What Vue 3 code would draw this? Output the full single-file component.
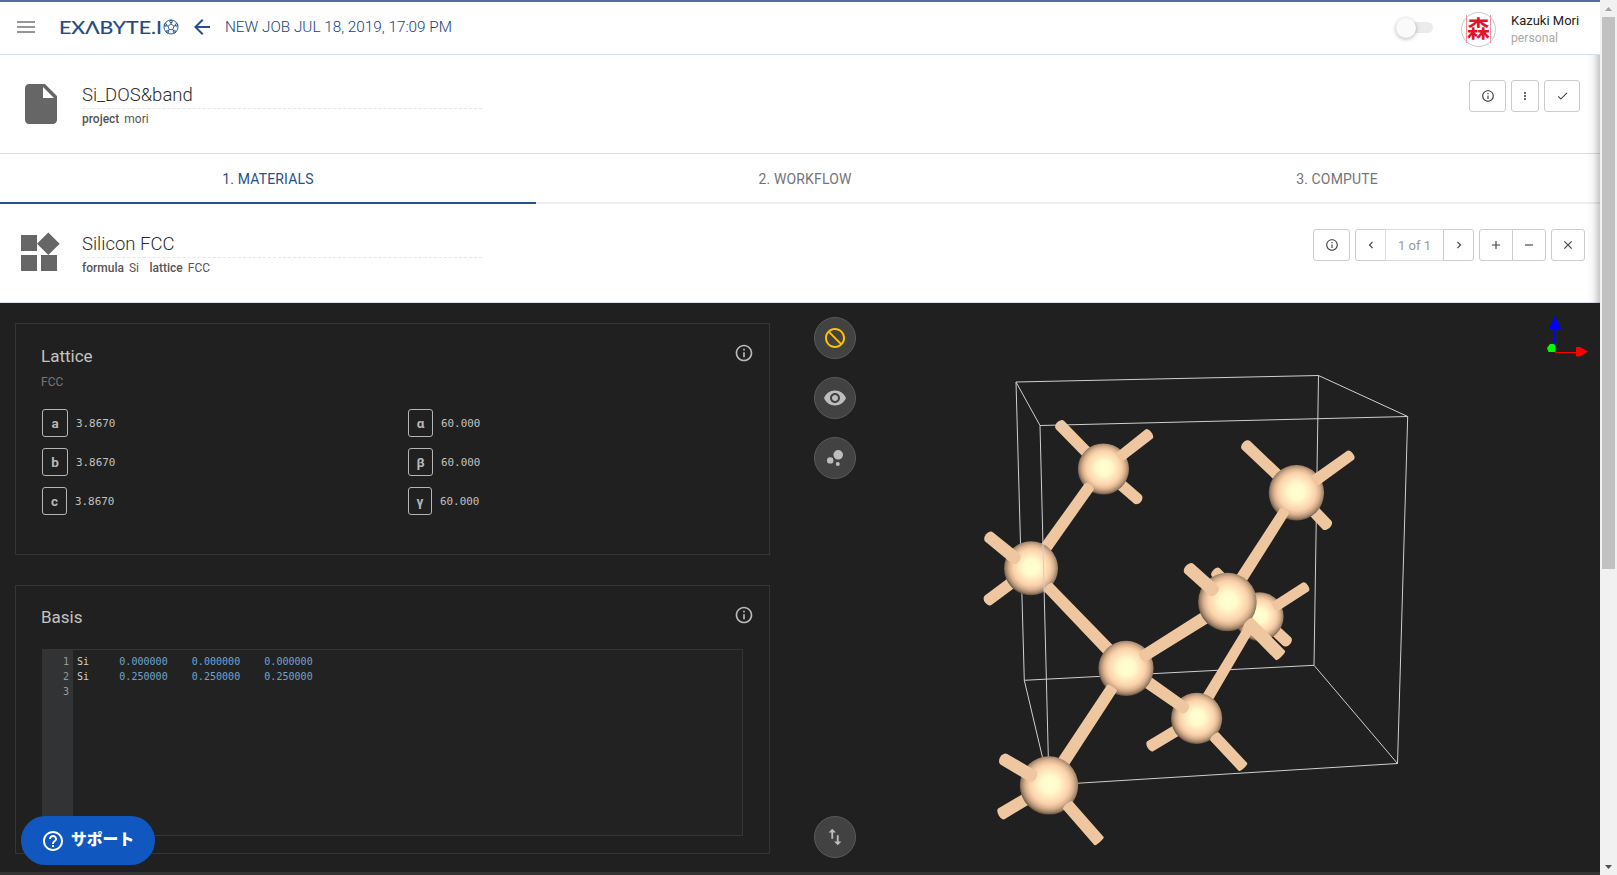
<script setup>
const icons = {
  info: 'M11 17h2v-6h-2v6zm1-15C6.48 2 2 6.48 2 12s4.48 10 10 10 10-4.48 10-10S17.52 2 12 2zm0 18c-4.41 0-8-3.59-8-8s3.59-8 8-8 8 3.59 8 8-3.59 8-8 8zM11 9h2V7h-2v2z',
  more: 'M12 8c1.1 0 2-.9 2-2s-.9-2-2-2-2 .9-2 2 .9 2 2 2zm0 2c-1.1 0-2 .9-2 2s.9 2 2 2 2-.9 2-2-.9-2-2-2zm0 6c-1.1 0-2 .9-2 2s.9 2 2 2 2-.9 2-2-.9-2-2-2z',
  check: 'M9 16.17L4.83 12l-1.42 1.41L9 19 21 7l-1.41-1.41z',
  left: 'M15.41 7.41L14 6l-6 6 6 6 1.41-1.41L10.83 12z',
  right: 'M10 6L8.59 7.41 13.17 12l-4.58 4.59L10 18l6-6z',
  add: 'M19 13h-6v6h-2v-6H5v-2h6V5h2v6h6v2z',
  remove: 'M19 13H5v-2h14v2z',
  close: 'M19 6.41L17.59 5 12 10.59 6.41 5 5 6.41 10.59 12 5 17.59 6.41 19 12 13.41 17.59 19 19 17.59 13.41 12z',
  file: 'M6 2c-1.1 0-1.99.9-1.99 2L4 20c0 1.1.89 2 1.99 2H18c1.1 0 2-.9 2-2V8l-6-6H6zm7 7V3.5L18.5 9H13z',
  widgets: 'M13 13v8h8v-8h-8zM3 21h8v-8H3v8zM3 3v8h8V3H3zm13.66-1.31L11 7.34 16.66 13l5.66-5.66-5.66-5.65z',
  back: 'M20 11H7.83l5.59-5.59L12 4l-8 8 8 8 1.41-1.41L7.83 13H20v-2z',
  block: 'M12 2C6.48 2 2 6.48 2 12s4.48 10 10 10 10-4.48 10-10S17.52 2 12 2zM4 12c0-4.42 3.58-8 8-8 1.85 0 3.55.63 4.9 1.69L5.69 16.9C4.63 15.55 4 13.85 4 12zm8 8c-1.85 0-3.55-.63-4.9-1.69L18.31 7.1C19.37 8.45 20 10.15 20 12c0 4.42-3.58 8-8 8z',
  eye: 'M12 4.5C7 4.5 2.73 7.61 1 12c1.73 4.39 6 7.5 11 7.5s9.27-3.11 11-7.5c-1.73-4.39-6-7.5-11-7.5zM12 17c-2.76 0-5-2.24-5-5s2.24-5 5-5 5 2.24 5 5-2.24 5-5 5zm0-8c-1.66 0-3 1.34-3 3s1.34 3 3 3 3-1.34 3-3-1.34-3-3-3z',
  bubbles: 'M7.2 11.2a3.2 3.2 0 1 0 0 6.4 3.2 3.2 0 0 0 0-6.4zM14.8 16a2 2 0 1 0 0 4 2 2 0 0 0 0-4zM15.2 4a4.8 4.8 0 1 0 0 9.6 4.8 4.8 0 0 0 0-9.6z',
  vert: 'M16 17.01V10h-2v7.01h-3L15 21l4-3.99h-3zM9 3L5 6.99h3V14h2V6.99h3L9 3z',
  help: 'M11 18h2v-2h-2v2zm1-16C6.48 2 2 6.48 2 12s4.48 10 10 10 10-4.48 10-10S17.52 2 12 2zm0 18c-4.41 0-8-3.59-8-8s3.59-8 8-8 8 3.59 8 8-3.59 8-8 8zm0-14c-2.21 0-4 1.79-4 4h2c0-1.1.9-2 2-2s2 .9 2 2c0 2-3 1.75-3 5h2c0-2.25 3-2.5 3-5 0-2.21-1.79-4-4-4z',
}
const tabs = ['1. Materials', '2. Workflow', '3. Compute']
const lengths = [['a', '3.8670'], ['b', '3.8670'], ['c', '3.8670']]
const angles = [['α', '60.000'], ['β', '60.000'], ['γ', '60.000']]
const basis = [
  ['Si', '0.000000', '0.000000', '0.000000'],
  ['Si', '0.250000', '0.250000', '0.250000'],
]
const tools = ['block', 'eye', 'bubbles']

// Bond cylinder: two ends with their widths and the depth of each rounded end.
function rod(x1, y1, x2, y2, w1 = 11.5, w2 = 11.5, b1 = 3, b2 = 3) {
  const l = Math.hypot(x2 - x1, y2 - y1)
  const nx = -(y2 - y1) / l
  const ny = (x2 - x1) / l
  const a = (Math.atan2(y2 - y1, x2 - x1) * 180) / Math.PI
  const p = (x, y, w) => `${(x + nx * w / 2).toFixed(2)} ${(y + ny * w / 2).toFixed(2)}`
  return { rod: `M${p(x1, y1, w1)}A${b1} ${w1 / 2} ${a} 0 1 ${p(x1, y1, -w1)}L${p(x2, y2, -w2)}A${b2} ${w2 / 2} ${a} 0 1 ${p(x2, y2, w2)}Z` }
}
const ball = (x, y, r) => ({ x, y, r })

// Painted back to front.
const scene = [
  rod(1060, 425, 1103, 469, 11.5, 11.5, 4),
  rod(1137.500, 499, 1103, 469, 11.5, 11.5, 4.5),
  ball(1103.4, 469, 25.6),
  rod(1121, 456, 1149, 434, 11, 11.7),
  rod(1089, 487, 1042, 553, 11, 11.8),
  rod(988.3, 600.2, 1031, 568.3, 11.5, 11.5, 4),
  ball(1031, 568.3, 27),
  rod(989, 536.8, 1015.5, 558.500, 12, 12.3, 4, 4.500),
  rod(1245.800, 445, 1296, 492.7, 11.5, 11.5, 3.500),
  rod(1327, 525, 1296.3, 492.7, 12, 12, 4),
  ball(1296.4, 492.8, 27.7),
  rod(1316, 480, 1350.500, 455.3, 11.5, 11),
  rod(1215.500, 572, 1259.5, 616, 11, 11),
  rod(1287, 641.5, 1259.5, 616, 11.500, 11.500, 4),
  ball(1259.3, 616.5, 24.3),
  rod(1276, 606, 1305.500, 587, 10.5, 10.5),
  rod(1150.2, 746.200, 1196.7, 718.3),
  rod(1248, 630, 1205, 702, 10, 11.5),
  ball(1196.6, 718.4, 25.6),
  rod(1214.5, 736.5, 1243, 767, 11.5, 11.5, 2, 1.5),
  rod(1126, 667, 1184.5, 708, 13, 11.500, 3, 4),
  rod(1048, 587, 1126, 668, 11.5, 13, 2, 2),
  ball(1126, 668.4, 27.6),
  rod(1284, 512, 1236, 587, 10.5, 12),
  rod(1143, 656.5, 1227.5, 603.5, 12, 13),
  ball(1227.4, 602, 29.3),
  rod(1189, 568.500, 1213.500, 590.500, 13, 13, 4, 4.500),
  rod(1248, 622.5, 1280.5, 655.5, 13, 13, 2, 1.5),
  rod(1112, 688, 1049, 784, 11.5, 13, 1.5, 1.5),
  rod(1001.3, 813.9, 1049, 785.5, 12.300, 12),
  ball(1049, 785.4, 29.2),
  rod(1004, 759.300, 1032.300, 776, 12.5, 12.7, 4.500, 4.500),
  rod(1067.5, 805, 1099, 841, 12, 12.5, 1.5, 1.5),
]
</script>

<template>
  <div class="window">
    <div class="page">
      <header class="topbar">
        <div class="burger"><i></i><i></i><i></i></div>
        <svg class="logo" width="121" height="24" viewBox="0 -4 121 24">
          <text x="0" y="14.5" textLength="103" lengthAdjust="spacingAndGlyphs">EXΛBYTE.I</text>
          <g fill="none" stroke="#1f4a87" stroke-width="0.9">
            <circle cx="112" cy="8" r="7" />
            <path d="M112 5l3 2.2-1.2 3.4h-3.6L109 7.200zM112 5V2.500M115 7.200l2.600-1M113.800 10.600l1.700 2.300M110.200 10.600l-1.700 2.300M109 7.200l-2.600-1" />
            <circle cx="112" cy="2.500" r="1.300" /><circle cx="117.500" cy="6" r="1.300" />
            <circle cx="115.500" cy="12.700" r="1.300" /><circle cx="108.500" cy="12.700" r="1.300" /><circle cx="106.500" cy="6" r="1.300" />
          </g>
        </svg>
        <svg class="back" width="24" height="24" viewBox="0 0 24 24"><path :d="icons.back" /></svg>
        <span class="crumb">NEW JOB JUL 18, 2019, 17:09 PM</span>
        <span class="toggle"><i></i></span>
        <span class="avatar"><b>森</b></span>
        <div class="user"><span>Kazuki Mori</span><small>personal</small></div>
      </header>

      <section class="entity job">
        <svg class="big" width="48" height="48" viewBox="0 0 24 24"><path :d="icons.file" /></svg>
        <div class="titles">
          <h1>Si_DOS&amp;band</h1>
          <p><b>project</b><span>mori</span></p>
        </div>
        <div class="actions">
          <button v-for="(n, i) in ['info', 'more', 'check']" :key="n" :class="'j' + i">
            <svg width="14" height="14" viewBox="0 0 24 24"><path :d="icons[n]" /></svg>
          </button>
        </div>
      </section>

      <nav class="tabs">
        <a v-for="(t, i) in tabs" :key="t" :class="{ on: i === 0 }">{{ t }}</a>
      </nav>

      <section class="entity material">
        <svg class="big" width="48" height="48" viewBox="0 0 24 24"><path :d="icons.widgets" /></svg>
        <div class="titles">
          <h1>Silicon FCC</h1>
          <p><b>formula</b><span>Si</span><b>lattice</b><span>FCC</span></p>
        </div>
        <div class="actions">
          <button class="m-info"><svg width="14" height="14" viewBox="0 0 24 24"><path :d="icons.info" /></svg></button>
          <div class="group">
            <button class="m-nav"><svg width="14" height="14" viewBox="0 0 24 24"><path :d="icons.left" /></svg></button>
            <span class="pager">1 of 1</span>
            <button class="m-nav"><svg width="14" height="14" viewBox="0 0 24 24"><path :d="icons.right" /></svg></button>
          </div>
          <div class="group">
            <button class="m-sq"><svg width="14" height="14" viewBox="0 0 24 24"><path :d="icons.add" /></svg></button>
            <button class="m-sq"><svg width="14" height="14" viewBox="0 0 24 24"><path :d="icons.remove" /></svg></button>
          </div>
          <button class="m-close"><svg width="14" height="14" viewBox="0 0 24 24"><path :d="icons.close" /></svg></button>
        </div>
      </section>

      <main class="designer">
        <div class="left">
          <section class="panel lattice">
            <div class="panel-head">
              <h2>Lattice</h2>
              <svg width="20" height="20" viewBox="0 0 24 24"><path :d="icons.info" /></svg>
            </div>
            <div class="sub">FCC</div>
            <div class="params">
              <ul v-for="(list, k) in [lengths, angles]" :key="k">
                <li v-for="(p, i) in list" :key="p[0]">
                  <b :class="{ slim: i === 2, greek: k === 1 }">{{ p[0] }}</b><span>{{ p[1] }}</span>
                </li>
              </ul>
            </div>
          </section>
          <section class="panel basis">
            <div class="panel-head">
              <h2>Basis</h2>
              <svg width="20" height="20" viewBox="0 0 24 24"><path :d="icons.info" /></svg>
            </div>
            <div class="editor">
              <div class="gutter"><span v-for="n in 3" :key="n">{{ n }}</span></div>
              <div class="code">
                <div v-for="(r, i) in basis" :key="i"><span>{{ r[0] }}</span><em v-for="(c, j) in r.slice(1)" :key="j">{{ c }}</em></div>
              </div>
            </div>
          </section>
        </div>

        <div class="tools">
          <span v-for="t in tools" :key="t" :class="['tool', t]">
            <svg width="24" height="24" viewBox="0 0 24 24"><path :d="icons[t]" /></svg>
          </span>
          <span class="tool last"><svg width="22" height="22" viewBox="0 0 24 24"><path :d="icons.vert" /></svg></span>
        </div>

        <svg class="viewer" width="700" height="569" viewBox="900 303 700 569">
          <defs>
            <radialGradient id="atom" cx="0.51" cy="0.48" r="0.52">
              <stop offset="0" stop-color="#ffffd2" />
              <stop offset="0.28" stop-color="#fffbcb" />
              <stop offset="0.5" stop-color="#ffe2b9" />
              <stop offset="0.66" stop-color="#fad0a9" />
              <stop offset="0.8" stop-color="#d8b18e" />
              <stop offset="0.92" stop-color="#a0836a" />
              <stop offset="1" stop-color="#66513f" />
            </radialGradient>
          </defs>
          <path class="cell" d="M1016 382L1318.500 375.500L1407.700 416.500L1397.500 763.500L1049 785L1024.300 680.300ZM1318.500 375.500L1314 665.300L1397.500 763.500M1314 665.300L1024.300 680.300" />
          <template v-for="(s, i) in scene" :key="i">
            <path v-if="s.rod" :d="s.rod" fill="#eec69f" />
            <circle v-else :cx="s.x" :cy="s.y" :r="s.r" fill="url(#atom)" />
          </template>
          <path class="cell" d="M1016 382L1040 425.500L1407.700 416.500M1040 425.500L1048.300 756.500" />
          <path d="M1554.500 352V328" stroke="#00f" />
          <path d="M1555 316l6 13h-12z" fill="#00f" />
          <path d="M1555 352.500h22" stroke="#f00" />
          <path d="M1576 347h4l8 4.500-8 5h-4z" fill="#f00" />
          <path d="M1547 348l3-4h4l1.500 2v6h-7z" fill="#0f0" />
        </svg>
      </main>
      <div class="strip"></div>
      <div class="edge"></div>
      <button class="support">
        <svg width="24" height="24" viewBox="0 0 24 24"><path :d="icons.help" /></svg><span>サポート</span>
      </button>
    </div>

    <aside class="scrollbar">
      <svg width="17" height="17" viewBox="0 0 17 17"><path d="M5 11l3.500-4 3.500 4z" fill="#a3a3a3" /></svg>
      <i></i>
      <svg width="17" height="17" viewBox="0 0 17 17"><path d="M5 7h7l-3.500 4z" fill="#505050" /></svg>
    </aside>
  </div>
</template>

<style>
body { margin: 0; overflow: hidden; }
</style>

<style scoped>
* { box-sizing: border-box; }
.window { display: flex; width: 1617px; height: 875px; overflow: hidden; font-family: Roboto, "Noto Sans CJK JP", sans-serif; color: #555; background: #fff; }
.page { position: relative; width: 1600px; height: 875px; display: flex; flex-direction: column; }
h1, h2, p, ul { margin: 0; padding: 0; font-weight: 400; }
button { font: inherit; padding: 0; margin: 0; background: #fff; }

.topbar { height: 55px; flex: none; display: flex; align-items: center; border-top: 2px solid #4f6d9f; border-bottom: 1px solid #d7dfe8; padding: 0 20px 0 17px; }
.burger { width: 18px; height: 12px; display: flex; flex-direction: column; justify-content: space-between; margin-top: -2px; }
.burger i { height: 2px; background: #949698; }
.logo { margin: -2px 0 0 23.500px; overflow: visible; flex: none; }
.logo text { font: 400 17.500px Lato, sans-serif; fill: #1f4a87; stroke: #1f4a87; stroke-width: 0.2px; }
.back { margin: -3px 0 0 10.500px; fill: #28508a; flex: none; }
.crumb { margin: -3px 0 0 11px; font-size: 15.300px; font-weight: 300; color: #173f7c; white-space: nowrap; width: 240px; }
.toggle { margin: -1px 0 0 auto; width: 31px; height: 11px; border-radius: 6px; background: #ebebeb; display: flex; align-items: center; }
.toggle i { width: 20px; height: 20px; flex: none; margin-left: -6px; border-radius: 50%; background: #fafafa; box-shadow: 0 1px 4px rgba(0, 0, 0, 0.3); }
.avatar { margin: 2px 15px 0 28px; width: 35px; height: 35px; border: 1px solid #c8c8c8; border-radius: 50%; display: flex; align-items: center; justify-content: center; }
.avatar b { width: 25px; height: 28px; border: 1px solid #f0929c; border-width: 0 1px; color: #e0142b; font: 700 23px/25px "Noto Sans CJK JP", sans-serif; display: flex; justify-content: center; }
.user { display: flex; flex-direction: column; width: 69px; white-space: nowrap; margin-top: 3px; }
.user span { font-size: 13px; line-height: 16px; color: #222; }
.user small { font-size: 12.200px; line-height: 18px; color: #aaa; }

.entity { display: flex; flex: none; }
.job { height: 99px; border-bottom: 1px solid #d7dbe8; padding: 25px 20px 0 17px; }
.material { height: 99px; border-bottom: 1px solid #dde1ee; padding: 25px 15px 0 15px; }
.big { fill: #666; flex: none; }
.titles { width: 400px; margin-left: 17px; }
.material .titles { margin-left: 19px; }
.titles h1 { height: 29px; border-bottom: 1px dashed #e6e6e6; font-size: 18.500px; font-weight: 300; line-height: 30px; color: #2c2c2c; }
.titles p { font-size: 12px; line-height: 20px; white-space: nowrap; }
.titles b { font-weight: 500; margin-right: 5px; }
.titles span { margin-right: 10.500px; }
.actions { margin-left: auto; display: flex; gap: 5px; height: 32px; }
.actions button, .pager { height: 32px; border: 1px solid #ccc; border-radius: 3px; display: flex; align-items: center; justify-content: center; fill: #444; }
.j0 { width: 37px; }
.j1 { width: 28px; }
.j2 { width: 36px; }
.j1 svg { width: 12px; }
.j2 svg { width: 13px; }
.m-info { width: 37px; }
.m-nav { width: 31px; }
.m-sq { width: 34px; }
.m-close { width: 34px; }
.group { display: flex; }
.group > * + * { margin-left: -1px; }
.group button:first-child { border-radius: 3px 0 0 3px; }
.group button:last-child { border-radius: 0 3px 3px 0; }
.pager { width: 59px; border-radius: 0; border-color: #ddd; font-size: 13px; color: #999; }

.tabs { height: 50px; flex: none; display: flex; overflow: hidden; }
.tabs a { width: 536px; flex: none; display: flex; align-items: center; justify-content: center; font-size: 14px; letter-spacing: 0.15px; padding-top: 2px; text-transform: uppercase; color: #757575; border-bottom: 2px solid #eee; }
.tabs a:nth-child(2) { width: 538px; }
.tabs a:nth-child(3) { width: 526px; }
.tabs a.on { color: #28508a; border-color: #28508a; }

.designer { height: 569px; flex: none; display: flex; background: #202020; }
.left { width: 770px; padding: 20px 0 0 15px; display: flex; flex-direction: column; gap: 30px; }
.panel { border: 1px solid #353535; padding: 0 15px 0 25px; }
.lattice { height: 232px; }
.basis { height: 269px; }
.panel-head { display: flex; justify-content: space-between; padding-top: 19px; height: 50px; fill: #b8b8b8; }
.panel-head h2 { font-size: 17px; line-height: 26px; color: #c4c4c4; }
.basis .panel-head h2 { line-height: 25px; }
.sub { font-size: 12px; line-height: 16px; color: #777; }
.params { display: flex; margin-top: 19px; }
.params ul { width: 366px; flex: none; list-style: none; display: flex; flex-direction: column; gap: 11px; }
.params ul + ul { width: 250px; }
.params li { height: 28px; display: flex; align-items: center; gap: 8px; padding-left: 1px; }
.params b { width: 26px; height: 28px; border: 1px solid #b5b5b5; border-radius: 3px; display: flex; align-items: center; justify-content: center; font-size: 13.500px; color: #b8b8b8; }
.params b.greek { width: 25px; }
.params b.slim { width: 25px; }
.params b.greek.slim { width: 24px; }
.params span { font: 10.900px "DejaVu Sans Mono", monospace; color: #c0c0c0; padding-top: 1px; }
.editor { height: 187px; margin: 13px 11px 0 1px; border: 1px solid #353535; border-left: 0; display: flex; background: #222; font: 10.050px/15px "DejaVu Sans Mono", monospace; }
.gutter { width: 31px; background: #313335; color: #999; display: flex; flex-direction: column; align-items: flex-end; padding: 4px 4px 0 0; }
.code { padding: 4px; color: #d0d0d0; white-space: nowrap; }
.code span, .code em { display: inline-block; width: 72.500px; font-style: normal; }
.code span { width: 42.300px; }
.code em { color: #6fa3cd; }

.tools { width: 130px; padding: 14px 0 14px; display: flex; flex-direction: column; align-items: center; gap: 18px; }
.tool { width: 42px; height: 42px; border: 1px solid #5a5a5a; border-radius: 50%; background: #424242; display: flex; align-items: center; justify-content: center; fill: #bdbdbd; }
.tool.block { fill: #ffc107; }
.tool.block svg { transform: scaleX(-1); }
.tool.last { margin-top: auto; }
.viewer { flex: none; display: block; }
.cell { fill: none; stroke: #cfcfcf; stroke-width: 1; }
.strip { height: 3px; background: #333; }
.edge { position: absolute; top: 55px; left: 1586px; width: 14px; height: 248px; background: linear-gradient(to right, rgba(0, 0, 0, 0), rgba(0, 0, 0, 0.04) 50%, rgba(0, 0, 0, 0.22)); }
.support { position: absolute; left: 21px; top: 816px; width: 134px; height: 49px; border: 0; border-radius: 25px; background: #1157c0; color: #fff; fill: #fff; display: flex; align-items: center; padding-left: 20px; gap: 6px; font: 900 15.800px/22px "Noto Sans CJK JP", sans-serif; white-space: nowrap; }
.support span { margin-top: -4px; }

.scrollbar { width: 17px; height: 875px; background: #f1f1f1; display: flex; flex-direction: column; align-items: center; }
.scrollbar i { width: 13px; height: 552px; background: #c1c1c1; margin-bottom: auto; }
.scrollbar svg { flex: none; }
</style>
